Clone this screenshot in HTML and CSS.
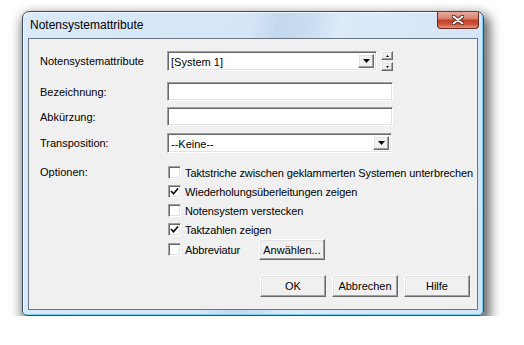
FILE: index.html
```html
<!DOCTYPE html>
<html lang="de">
<head>
    <meta charset="UTF-8">
    <title>Notensystemattribute</title>
    <link rel="stylesheet" href="styles.css">
</head>
<body>
    <div class="window">
        <div class="titlebar">
            <span class="title">Notensystemattribute</span>
            <div class="close">
                <svg width="12" height="10" viewBox="0 0 12 10">
                    <path d="M1.5 1.5 L10.5 8.5 M10.5 1.5 L1.5 8.5" stroke="#4a2019" stroke-width="3.8" stroke-linecap="round"/>
                    <path d="M1.5 1.5 L10.5 8.5 M10.5 1.5 L1.5 8.5" stroke="#fff" stroke-width="2" stroke-linecap="round"/>
                </svg>
            </div>
        </div>
        <div class="client">
            <div class="row row-system">
                <span class="label">Notensystemattribute</span>
                <div class="combo combo-system">
                    <span class="combo-text">[System 1]</span>
                    <span class="drop"><svg width="7" height="4" viewBox="0 0 7 4"><path d="M0 0 H7 L3.5 4 Z" fill="#000"/></svg></span>
                </div>
                <div class="spin">
                    <span class="spin-btn"><svg width="3" height="2" viewBox="0 0 3 2"><path d="M0 2 H3 L1.5 0 Z" fill="#000"/></svg></span>
                    <span class="spin-btn"><svg width="3" height="2" viewBox="0 0 3 2"><path d="M0 0 H3 L1.5 2 Z" fill="#000"/></svg></span>
                </div>
            </div>
            <div class="row row-name">
                <span class="label">Bezeichnung:</span>
                <div class="textbox"></div>
            </div>
            <div class="row row-abbr">
                <span class="label">Abkürzung:</span>
                <div class="textbox"></div>
            </div>
            <div class="row row-trans">
                <span class="label">Transposition:</span>
                <div class="combo combo-trans">
                    <span class="combo-text">--Keine--</span>
                    <span class="drop"><svg width="7" height="4" viewBox="0 0 7 4"><path d="M0 0 H7 L3.5 4 Z" fill="#000"/></svg></span>
                </div>
            </div>
            <div class="options">
                <span class="label option-label">Optionen:</span>
                <div class="checks">
                    <div class="check-row">
                        <span class="checkbox"></span>
                        <span>Taktstriche zwischen geklammerten Systemen unterbrechen</span>
                    </div>
                    <div class="check-row">
                        <span class="checkbox"><svg width="9" height="9" viewBox="0 0 9 9"><path d="M1 4 L3.5 6.8 L8 1.5" stroke="#000" stroke-width="1.6" fill="none"/></svg></span>
                        <span>Wiederholungsüberleitungen zeigen</span>
                    </div>
                    <div class="check-row">
                        <span class="checkbox"></span>
                        <span>Notensystem verstecken</span>
                    </div>
                    <div class="check-row">
                        <span class="checkbox"><svg width="9" height="9" viewBox="0 0 9 9"><path d="M1 4 L3.5 6.8 L8 1.5" stroke="#000" stroke-width="1.6" fill="none"/></svg></span>
                        <span>Taktzahlen zeigen</span>
                    </div>
                    <div class="check-row check-last">
                        <span class="check-item">
                            <span class="checkbox"></span>
                            <span>Abbreviatur</span>
                        </span>
                        <span class="button button-select">Anwählen...</span>
                    </div>
                </div>
            </div>
            <div class="actions">
                <span class="button">OK</span>
                <span class="button">Abbrechen</span>
                <span class="button">Hilfe</span>
            </div>
        </div>
    </div>
</body>
</html>
```

FILE: styles.css
```css
body {
    margin: 0;
    padding: 11px 0 0 22px;
    background: #fff;
    font-family: "Liberation Sans", Arial, sans-serif;
    font-size: 11px;
    color: #000;
}
.window {
    width: 462px;
    box-sizing: border-box;
    border: 1px solid #3c4a5a;
    border-radius: 7px 7px 5px 5px;
    background: linear-gradient(100deg, #d9e9f9 0%, #d3e5f7 45%, #c4d9ee 50%, #c9dcf0 56%, #dceafa 62%, #d1e3f5 100%);
    padding: 0 5px 5px 5px;
    box-shadow: 3px 6px 12px 3px rgba(0, 0, 0, 0.6), inset -1px -1px 0 #7ad3f6, inset 1px 1px 0 rgba(255, 255, 255, 0.7);
}
.titlebar {
    display: flex;
    justify-content: space-between;
    height: 26px;
}
.title {
    align-self: center;
    padding-left: 2px;
    font-size: 12px;
    color: #000;
}
.close {
    width: 42px;
    height: 17px;
    box-sizing: border-box;
    margin-right: -1px;
    border: 1px solid #6b2a20;
    border-top: none;
    border-radius: 0 0 4px 4px;
    background: linear-gradient(#e6aa9d 0%, #d98470 40%, #c2432a 52%, #cc5138 75%, #e0957a 100%);
    display: flex;
    align-items: center;
    justify-content: center;
}
.client {
    background: #f0f0f0;
    border: 1px solid #6a7684;
    padding: 12px 7px 12px 11px;
}
.row {
    display: flex;
    align-items: center;
}
.label {
    width: 127px;
    flex: 0 0 127px;
}
.row-system {
    height: 20px;
}
.row-name {
    margin-top: 11px;
    height: 19px;
}
.row-abbr {
    margin-top: 6px;
    height: 19px;
}
.row-trans {
    margin-top: 7px;
    height: 20px;
}
.textbox, .combo, .checkbox {
    box-sizing: border-box;
    background: #fff;
    border: 1px solid;
    border-color: #a0a0a0 #fff #fff #a0a0a0;
    box-shadow: inset 1px 1px 0 #696969, inset -1px -1px 0 #e3e3e3;
}
.textbox {
    width: 226px;
    height: 19px;
}
.combo {
    display: flex;
    align-items: stretch;
    height: 20px;
    padding: 2px;
}
.combo-system {
    width: 210px;
}
.combo-trans {
    width: 225px;
}
.combo-text {
    flex: 1;
    line-height: 16px;
    padding-left: 1px;
}
.drop, .spin-btn, .button {
    box-sizing: border-box;
    background: #f0f0f0;
    border: 1px solid;
    border-color: #fff #696969 #696969 #fff;
    box-shadow: inset -1px -1px 0 #a0a0a0, inset 1px 1px 0 #e3e3e3;
    display: flex;
    align-items: center;
    justify-content: center;
}
.drop {
    width: 16px;
}
.spin {
    display: flex;
    flex-direction: column;
    gap: 2px;
    margin-left: 4px;
}
.spin-btn {
    width: 12px;
    height: 9px;
}
.options {
    display: flex;
    margin-top: 10px;
}
.option-label {
    line-height: 19px;
}
.checks {
    display: flex;
    flex-direction: column;
    white-space: nowrap;
    letter-spacing: -0.1px;
}
.check-row, .check-item {
    display: flex;
    align-items: center;
    height: 19px;
}
.check-row.check-last {
    height: 21px;
}
.check-item {
    width: 92px;
}
.checkbox {
    width: 13px;
    height: 13px;
    margin: 0 4px 0 1px;
    display: flex;
    align-items: center;
    justify-content: center;
}
.button {
    height: 22px;
    width: 66px;
    letter-spacing: 0;
}
.button-select {
    height: 21px;
}
.actions {
    display: flex;
    justify-content: flex-end;
    gap: 6px;
    margin-top: 15px;
}
```
